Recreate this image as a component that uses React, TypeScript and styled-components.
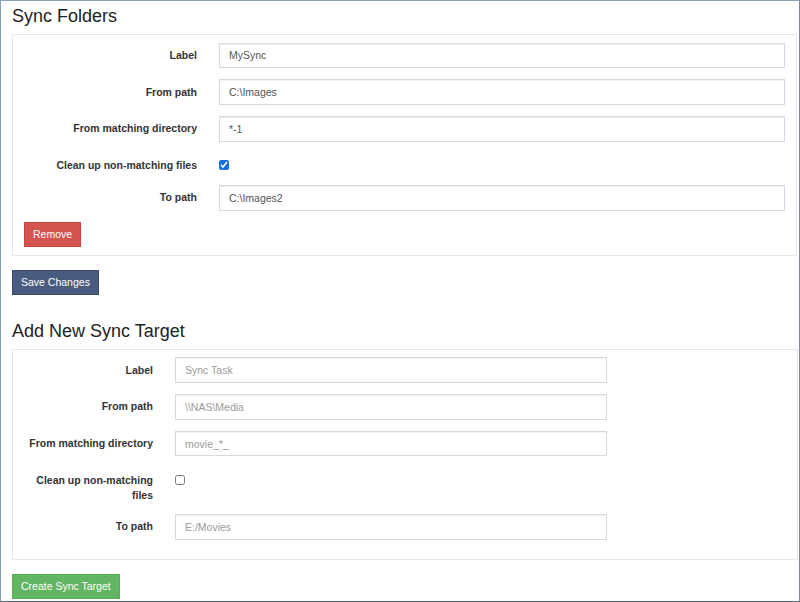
import React from 'react';
import styled, { createGlobalStyle } from 'styled-components';

const GlobalStyle = createGlobalStyle`
  html, body {
    margin: 0;
    padding: 0;
    background: #ffffff;
  }
  body {
    font-family: "Liberation Sans", Arial, Helvetica, sans-serif;
    color: #333333;
  }
`;

const Frame = styled.div`
  box-sizing: border-box;
  width: 800px;
  height: 602px;
  overflow: hidden;
  border-style: solid;
  border-width: 1px;
  border-color: #8b9dbc #7d8999 #56657a #8b9dbc;
  padding-left: 11px;
`;

const Section = styled.section<{ $gapBelow?: number }>`
  display: flex;
  flex-direction: column;
  margin-bottom: ${({ $gapBelow }) => $gapBelow ?? 0}px;
`;

const Title = styled.h3`
  margin: 5px 0 8px;
  font-size: 18px;
  line-height: 20px;
  font-weight: 400;
  color: #222222;
`;

const Panel = styled.div<{ $right: number }>`
  border: 1px solid #e6e6e6;
  margin-right: ${({ $right }) => $right}px;
  padding: 7.5px 11px 8px;
`;

const Row = styled.div<{ $label: number; $field: string }>`
  display: grid;
  grid-template-columns: ${({ $label }) => $label}px ${({ $field }) => $field};
  column-gap: 22px;
  align-items: start;
  margin-bottom: 11.25px;
`;

const Label = styled.label`
  font-size: 10.5px;
  line-height: 15px;
  font-weight: 700;
  color: #333333;
  text-align: right;
  padding-top: 5.25px;
  min-height: 15.75px;
`;

const Input = styled.input`
  box-sizing: border-box;
  width: 100%;
  height: 25.5px;
  margin: 0;
  padding: 0 9px;
  border: 1px solid #d8d8d8;
  border-radius: 0;
  box-shadow: inset 0 1px 1px rgba(0, 0, 0, 0.06);
  font-family: inherit;
  font-size: 10.5px;
  color: #555555;
  outline: none;

  &::placeholder {
    color: #9a9a9a;
    opacity: 1;
  }
`;

const CheckCell = styled.div`
  display: flex;
  align-items: flex-start;
`;

const Check = styled.input`
  display: block;
  width: 10px;
  height: 10px;
  margin: 7.5px 0 0;
  accent-color: #1a6fe0;
`;

const Button = styled.button<{ $tone: 'danger' | 'primary' | 'success' }>`
  align-self: flex-start;
  height: 25px;
  padding: 0 8px;
  margin: 0;
  border: 1px solid
    ${({ $tone }) =>
      $tone === 'danger' ? '#c9443f' : $tone === 'primary' ? '#3a4a6c' : '#57ad57'};
  background: ${({ $tone }) =>
    $tone === 'danger' ? '#d35450' : $tone === 'primary' ? '#4a5b80' : '#62b562'};
  color: #ffffff;
  border-radius: 0;
  font-family: inherit;
  font-size: 10.5px;
  cursor: pointer;
`;

const Footer = styled.div`
  display: flex;
  margin-top: 14px;
`;

interface Field {
  label: string;
  kind: 'text' | 'check';
  value?: string;
  placeholder?: string;
  checked?: boolean;
}

const existing: Field[] = [
  { label: 'Label', kind: 'text', value: 'MySync' },
  { label: 'From path', kind: 'text', value: 'C:\\Images' },
  { label: 'From matching directory', kind: 'text', value: '*-1' },
  { label: 'Clean up non-matching files', kind: 'check', checked: true },
  { label: 'To path', kind: 'text', value: 'C:\\Images2' },
];

const fresh: Field[] = [
  { label: 'Label', kind: 'text', placeholder: 'Sync Task' },
  { label: 'From path', kind: 'text', placeholder: '\\\\NAS\\Media' },
  { label: 'From matching directory', kind: 'text', placeholder: 'movie_*_' },
  { label: 'Clean up non-matching files', kind: 'check', checked: false },
  { label: 'To path', kind: 'text', placeholder: 'E:/Movies' },
];

const FieldRows: React.FC<{ fields: Field[]; labelWidth: number; fieldWidth: string }> = ({
  fields,
  labelWidth,
  fieldWidth,
}) => (
  <>
    {fields.map((f) => (
      <Row key={f.label} $label={labelWidth} $field={fieldWidth}>
        <Label>{f.label}</Label>
        {f.kind === 'check' ? (
          <CheckCell>
            <Check type="checkbox" defaultChecked={f.checked} />
          </CheckCell>
        ) : (
          <Input type="text" defaultValue={f.value} placeholder={f.placeholder} />
        )}
      </Row>
    ))}
  </>
);

const App: React.FC = () => (
  <Frame>
    <GlobalStyle />
    <Section $gapBelow={21}>
      <Title>Sync Folders</Title>
      <Panel $right={2}>
        <FieldRows fields={existing} labelWidth={173} fieldWidth="1fr" />
        <Button $tone="danger">Remove</Button>
      </Panel>
      <Footer>
        <Button $tone="primary">Save Changes</Button>
      </Footer>
    </Section>
    <Section>
      <Title>Add New Sync Target</Title>
      <Panel $right={1}>
        <FieldRows fields={fresh} labelWidth={129} fieldWidth="432px" />
      </Panel>
      <Footer>
        <Button $tone="success">Create Sync Target</Button>
      </Footer>
    </Section>
  </Frame>
);

export default App;
